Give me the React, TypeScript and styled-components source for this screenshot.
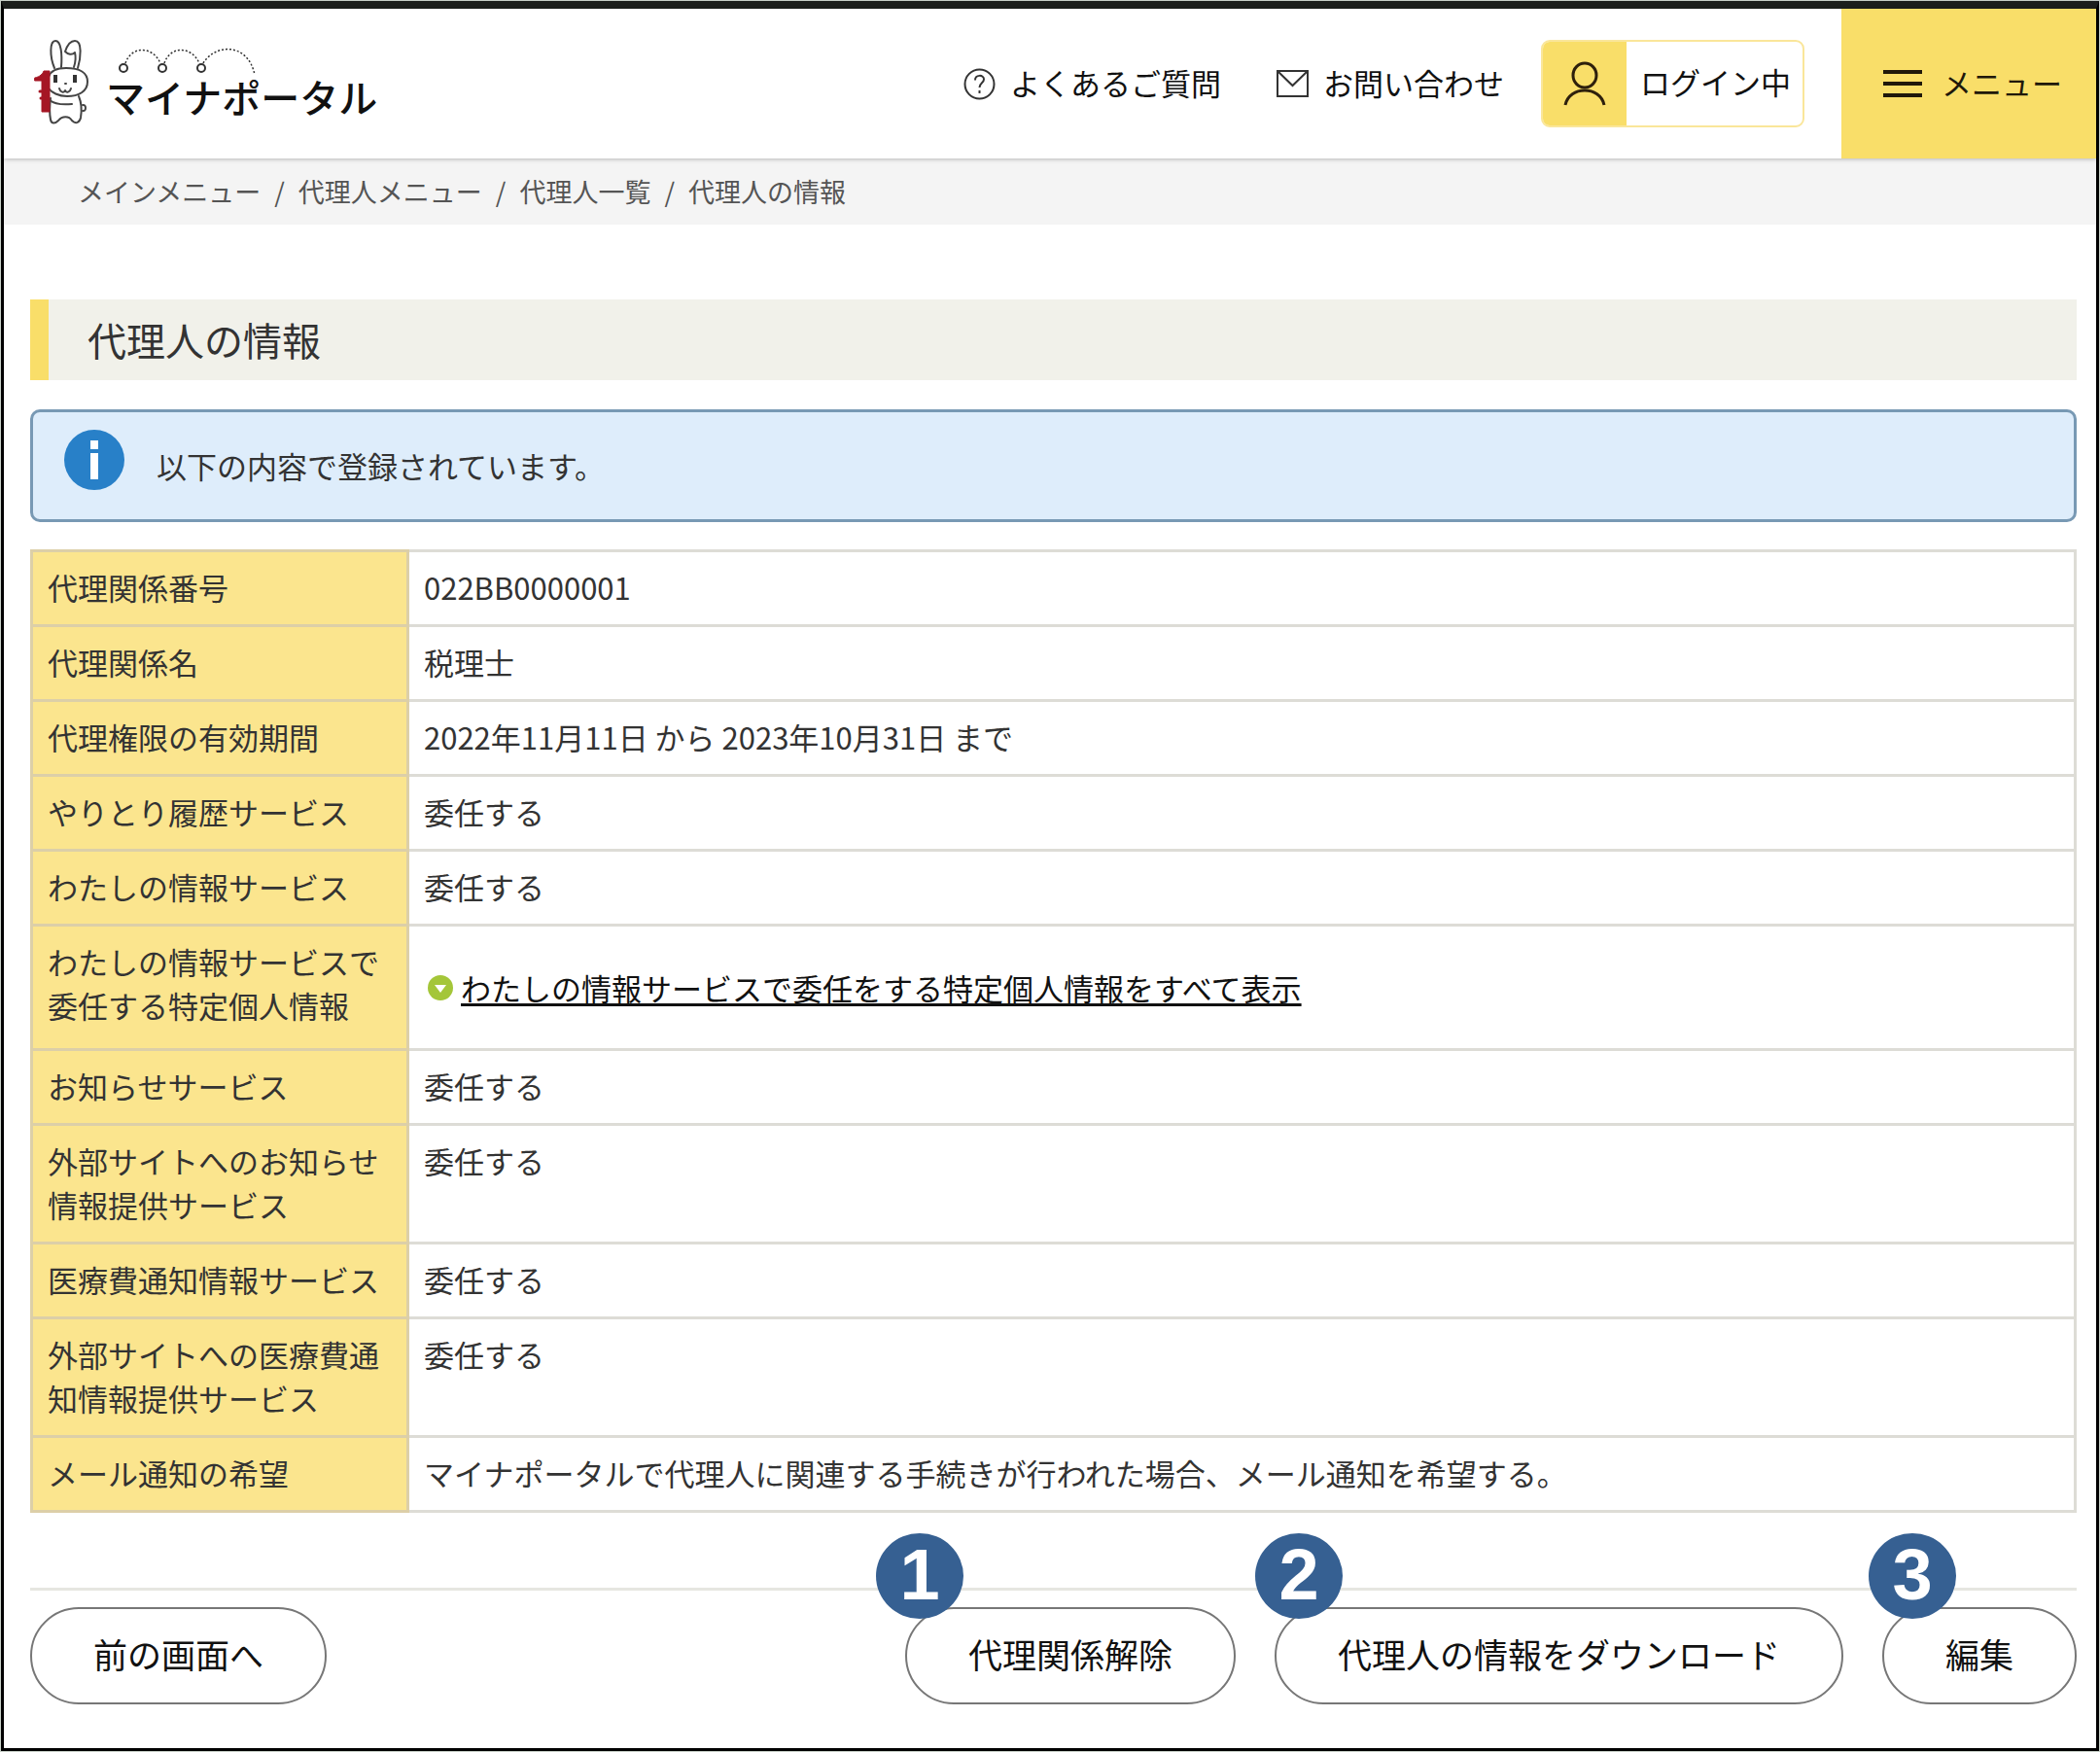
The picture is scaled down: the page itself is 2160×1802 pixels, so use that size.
import React from "react";
import styled, { createGlobalStyle } from "styled-components";

const GlobalStyle = createGlobalStyle`
  *, *::before, *::after { box-sizing: border-box; }
  body {
    margin: 0;
    background: #c8d0c8;
    color: #333;
    font-family: "Noto Sans CJK JP", "Noto Sans", sans-serif;
    font-size: 31px;
    line-height: 45px;
  }
  button { font: inherit; color: inherit; cursor: pointer; }
  a { color: inherit; }
  h1, p { margin: 0; }
`;

const Frame = styled.div`
  margin: 0 1px;
  border: 3px solid #000;
  border-top: 8px solid #1c1f1c;
  min-height: calc(100vh - 2px);
  background: #fff;
`;

const Page = styled.div`
  padding: 1px 0;
  background: #c8d0c8;
`;

const Header = styled.header`
  position: relative;
  display: flex;
  align-items: center;
  height: 154px;
  padding-left: 31px;
  background: #fff;
  box-shadow: 0 1px 4px rgba(0, 0, 0, 0.25);
`;

const Logo = styled.a`
  display: flex;
  align-items: center;
  gap: 16px;
  margin-right: auto;
  color: #111;
  text-decoration: none;
`;

const Wordmark = styled.span`
  display: flex;
  flex-direction: column;
  padding-bottom: 6px;
  font-size: 40px;
  line-height: 40px;
  font-weight: 500;
`;

const HeaderNav = styled.nav`
  display: flex;
  align-items: center;
  gap: 57px;
  margin-right: 38px;
`;

const HeaderLink = styled.a`
  display: flex;
  align-items: center;
  gap: 15px;
  color: #111;
  text-decoration: none;

  span { padding-bottom: 4px; }
`;

const LoginButton = styled.button`
  display: flex;
  align-items: stretch;
  height: 90px;
  padding: 0;
  border: 2px solid #fae69a;
  border-radius: 9px;
  background: #fff;
  color: #111;
  overflow: hidden;
`;

const LoginIcon = styled.span`
  display: grid;
  place-items: center;
  width: 86px;
  background: #f9de69;
`;

const LoginLabel = styled.span`
  align-self: center;
  padding: 0 12px 6px 14px;
`;

const MenuButton = styled.button`
  display: flex;
  align-items: center;
  justify-content: center;
  gap: 20px;
  align-self: stretch;
  width: 262px;
  margin-left: 38px;
  padding: 0 0 0 8px;
  border: 0;
  background: #f9de69;
  color: #20180a;

  span { padding-bottom: 4px; }
`;

const Breadcrumb = styled.nav`
  background: #f4f4f4;
  padding: 11px 76px 12px;
`;

const Crumbs = styled.ol`
  display: flex;
  margin: 0;
  padding: 0;
  list-style: none;
  font-size: 27px;
  color: #555;

  li + li::before {
    content: "/";
    padding: 0 14px;
  }
  a { text-decoration: none; }
`;

const Main = styled.main`
  padding: 77px 20px 45px 27px;
`;

const Title = styled.h1`
  border-left: 19px solid #f9de69;
  background: #f1f1ea;
  padding: 14px 40px;
  font-size: 40px;
  line-height: 55px;
  font-weight: 400;
`;

const Notice = styled.div`
  display: flex;
  align-items: center;
  gap: 33px;
  height: 116px;
  margin: 30px 0 28px;
  padding: 0 32px 12px;
  border: 3px solid #7899b4;
  border-radius: 10px;
  background: #deedfb;

  p { padding-top: 10px; }
`;

const InfoTable = styled.table`
  width: 100%;
  border-collapse: collapse;
  table-layout: fixed;

  th, td {
    border: 3px solid #dddcd6;
    padding: 13px 14px 16px 15px;
    text-align: left;
    vertical-align: top;
    font-weight: 400;
  }
  th {
    width: 387px;
    background: #fbe58e;
    border-color: #dccfa8;
  }
`;

const Expand = styled.a`
  display: inline-flex;
  align-items: center;
  gap: 8px;
  margin: 27px 4px 24px;
  color: #111;
  text-decoration: none;

  span {
    text-decoration: underline;
    text-decoration-thickness: 3px;
    text-underline-offset: 3px;
    text-decoration-skip-ink: none;
  }
`;

const Actions = styled.div`
  display: flex;
  gap: 40px;
  margin-top: 77px;
  padding-top: 17px;
  border-top: 3px solid #e6e6e0;
`;

const ActionItem = styled.div<{ $first?: boolean }>`
  position: relative;
  margin-right: ${(p) => (p.$first ? "auto" : "0")};
`;

const PillButton = styled.button`
  display: block;
  height: 100px;
  padding: 0 63px 6px;
  border: 2px solid #777;
  border-radius: 50px;
  background: #fff;
  color: #111;
  font-size: 35px;
`;

const Badge = styled.span<{ $left: number }>`
  position: absolute;
  top: -76px;
  left: ${(p) => p.$left}px;
  width: 90px;
  height: 88px;
  border-radius: 50%;
  background: #366092;
  color: #fff;
  font-family: "Liberation Sans", Arial, sans-serif;
  font-size: 74px;
  font-weight: 700;
  line-height: 86px;
  text-align: center;
`;

const Rabbit = () => (
  <svg width="58" height="90" viewBox="0 0 58 90" fill="none" stroke="#444" strokeWidth="2" strokeLinecap="round" strokeLinejoin="round" aria-hidden="true">
    <path d="M21 29C16 17 16 1 22 1s7 14 6 27" />
    <path d="M41 28c2-6 2-11 1-15-3 3-7 2-10-1 2-6 5-11 10-11 8 0 6 18 3 28" />
    <path d="M17 60c-1 8-1 17 0 22 1 5 5 4 8 1 4-5 11-5 14 0 4 4 8 2 9-3 1-6 1-15-2-22" fill="#fff" />
    <path d="M15 38c2-6 9-9 18-9 14 0 22 5 22 14 0 10-9 15-21 15-9 0-16-4-19-8" fill="#fff" />
    <path d="M16 62c5 4 13 5 23 4M50 67c4-1 4 7 0 6" />
    <path d="M22 36v8M42 36v8" stroke="#333" strokeWidth="4" strokeLinecap="butt" />
    <path d="M26 50c1 4 5 5 6 2 1 3 5 2 6-2M32 45h1" />
    <path d="M1 39c5-1 8-4 9-7h6v42H8V42H1z" fill="#a51624" stroke="#a51624" strokeWidth="1" />
    <path d="M6 53h4M7 60h3" stroke="#a51624" strokeWidth="3" />
  </svg>
);

const Hops = () => (
  <svg width="160" height="32" viewBox="0 0 160 32" fill="none" stroke="#333" strokeWidth="2" aria-hidden="true">
    <g strokeDasharray="2 2" strokeWidth="1.500">
      <path d="M20 18C26 0 48 0 56 18M60 18C66 0 88 0 96 18M100 18C112-2 146-4 153 30" />
    </g>
    <circle cx="18" cy="23" r="4" />
    <circle cx="58" cy="23" r="4" />
    <circle cx="98" cy="23" r="4" />
  </svg>
);

const QuestionIcon = () => (
  <svg width="33" height="33" viewBox="0 0 33 33" fill="none" stroke="#333" strokeWidth="2" aria-hidden="true">
    <circle cx="16.5" cy="16.5" r="15" />
    <path d="M12 12.500c0-6 9-6 9-1 0 4-4.500 3.500-4.500 8.500" />
    <path d="M16.500 23v3" />
  </svg>
);

const MailIcon = () => (
  <svg width="33" height="28" viewBox="0 0 33 28" fill="none" stroke="#333" strokeWidth="2" aria-hidden="true">
    <path d="M1 1h31v26H1zM1 1l15.500 15L32 1" />
  </svg>
);

const PersonIcon = () => (
  <svg width="44" height="46" viewBox="0 0 44 46" fill="none" stroke="#2e200c" strokeWidth="3" aria-hidden="true">
    <ellipse cx="22" cy="14.500" rx="12" ry="12.500" />
    <path d="M2 45c4-20 36-20 40 0" />
  </svg>
);

const MenuIcon = () => (
  <svg width="40" height="28" viewBox="0 0 40 28" fill="#20180a" aria-hidden="true">
    <path d="M0 0h40v4H0zM0 12h40v4H0zM0 24h40v4H0z" />
  </svg>
);

const InfoIcon = () => (
  <svg width="62" height="62" viewBox="0 0 62 62" aria-hidden="true">
    <circle cx="31" cy="31" r="31" fill="#2880c8" />
    <path d="M27 11h8v9h-8zM27 24h8v27h-8z" fill="#fff" />
  </svg>
);

const DownIcon = () => (
  <svg width="26" height="26" viewBox="0 0 26 26" aria-hidden="true">
    <circle cx="13" cy="13" r="13" fill="#a4c639" />
    <path d="M7 10h12l-6 8z" fill="#fff" />
  </svg>
);

const crumbs = ["メインメニュー", "代理人メニュー", "代理人一覧"];

const rows: { label: string; value?: string; link?: string }[] = [
  { label: "代理関係番号", value: "022BB0000001" },
  { label: "代理関係名", value: "税理士" },
  { label: "代理権限の有効期間", value: "2022年11月11日 から 2023年10月31日 まで" },
  { label: "やりとり履歴サービス", value: "委任する" },
  { label: "わたしの情報サービス", value: "委任する" },
  {
    label: "わたしの情報サービスで委任する特定個人情報",
    link: "わたしの情報サービスで委任をする特定個人情報をすべて表示",
  },
  { label: "お知らせサービス", value: "委任する" },
  { label: "外部サイトへのお知らせ情報提供サービス", value: "委任する" },
  { label: "医療費通知情報サービス", value: "委任する" },
  { label: "外部サイトへの医療費通知情報提供サービス", value: "委任する" },
  {
    label: "メール通知の希望",
    value: "マイナポータルで代理人に関連する手続きが行われた場合、メール通知を希望する。",
  },
];

const actions = [
  { label: "代理関係解除", badge: "1", left: -30 },
  { label: "代理人の情報をダウンロード", badge: "2", left: -20 },
  { label: "編集", badge: "3", left: -14 },
];

export default function App() {
  return (
    <Page lang="ja">
      <GlobalStyle />
      <Frame>
        <Header>
          <Logo href="#">
            <Rabbit />
            <Wordmark>
              <Hops />
              マイナポータル
            </Wordmark>
          </Logo>
          <HeaderNav>
            <HeaderLink href="#faq">
              <QuestionIcon />
              <span>よくあるご質問</span>
            </HeaderLink>
            <HeaderLink href="#contact">
              <MailIcon />
              <span>お問い合わせ</span>
            </HeaderLink>
          </HeaderNav>
          <LoginButton type="button">
            <LoginIcon>
              <PersonIcon />
            </LoginIcon>
            <LoginLabel>ログイン中</LoginLabel>
          </LoginButton>
          <MenuButton type="button">
            <MenuIcon />
            <span>メニュー</span>
          </MenuButton>
        </Header>
        <Breadcrumb aria-label="パンくず">
          <Crumbs>
            {crumbs.map((c) => (
              <li key={c}>
                <a href="#">{c}</a>
              </li>
            ))}
            <li aria-current="page">代理人の情報</li>
          </Crumbs>
        </Breadcrumb>
        <Main>
          <Title>代理人の情報</Title>
          <Notice role="status">
            <InfoIcon />
            <p>以下の内容で登録されています。</p>
          </Notice>
          <InfoTable>
            <tbody>
              {rows.map((r) => (
                <tr key={r.label}>
                  <th scope="row">{r.label}</th>
                  <td>
                    {r.link ? (
                      <Expand href="#all">
                        <DownIcon />
                        <span>{r.link}</span>
                      </Expand>
                    ) : (
                      r.value
                    )}
                  </td>
                </tr>
              ))}
            </tbody>
          </InfoTable>
          <Actions>
            <ActionItem $first>
              <PillButton type="button">前の画面へ</PillButton>
            </ActionItem>
            {actions.map((a) => (
              <ActionItem key={a.badge}>
                <PillButton type="button">{a.label}</PillButton>
                <Badge $left={a.left}>{a.badge}</Badge>
              </ActionItem>
            ))}
          </Actions>
        </Main>
      </Frame>
    </Page>
  );
}
